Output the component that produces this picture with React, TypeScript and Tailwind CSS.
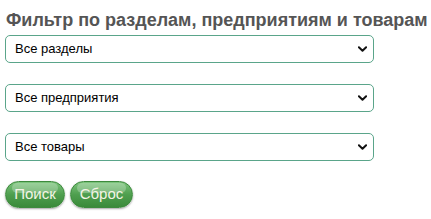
import React from 'react';

// Filter panel: three selects and two glossy green buttons.

const selects = ['Все разделы', 'Все предприятия', 'Все товары'];

function Chevron() {
  return (
    <svg
      viewBox="0 0 10 6"
      className="pointer-events-none absolute right-[7px] top-1/2 h-[6px] w-[9px] -translate-y-1/2"
    >
      <path d="M1 1l4 4 4-4" fill="none" stroke="#111" strokeWidth="2.2" strokeLinecap="round" strokeLinejoin="round" />
    </svg>
  );
}

function GreenButton({ label, width }: { label: string; width: string }) {
  return (
    <button
      className={`${width} relative h-[27px] overflow-hidden rounded-full border border-[#3d8a3d] bg-[linear-gradient(#7cc47c,#4f9f4f_50%,#3a8a3a)] text-[15px] text-[#f4f4e6] shadow-[0_1px_2px_rgba(0,0,0,0.35)]`}
      style={{ fontFamily: 'Arial, "Liberation Sans", sans-serif' }}
    >
      <span className="absolute inset-x-[6px] top-[1px] h-[10px] rounded-full bg-white/25" />
      <span className="relative">{label}</span>
    </button>
  );
}

export default function App() {
  return (
    <div
      className="h-[219px] w-[431px] overflow-hidden bg-white pl-[5px] pt-[9px]"
      style={{ fontFamily: 'Arial, "Liberation Sans", sans-serif' }}
    >
      <h2 className="whitespace-nowrap pl-[1px] text-[18px] leading-[22px] font-bold text-[#555555]">
        Фильтр по разделам, предприятиям и товарам
      </h2>
      <div className="mt-[4px] flex flex-col gap-[21px]">
        {selects.map((s) => (
          <div key={s} className="relative h-[28px] w-[369px]">
            <select className="h-full w-full appearance-none rounded-[5px] border border-[#5aa58a] bg-white pl-[9px] text-[13px] text-black outline-none">
              <option>{s}</option>
            </select>
            <Chevron />
          </div>
        ))}
      </div>
      <div className="mt-[20px] flex gap-[5px]">
        <GreenButton label="Поиск" width="w-[60px]" />
        <GreenButton label="Сброс" width="w-[63px]" />
      </div>
    </div>
  );
}
